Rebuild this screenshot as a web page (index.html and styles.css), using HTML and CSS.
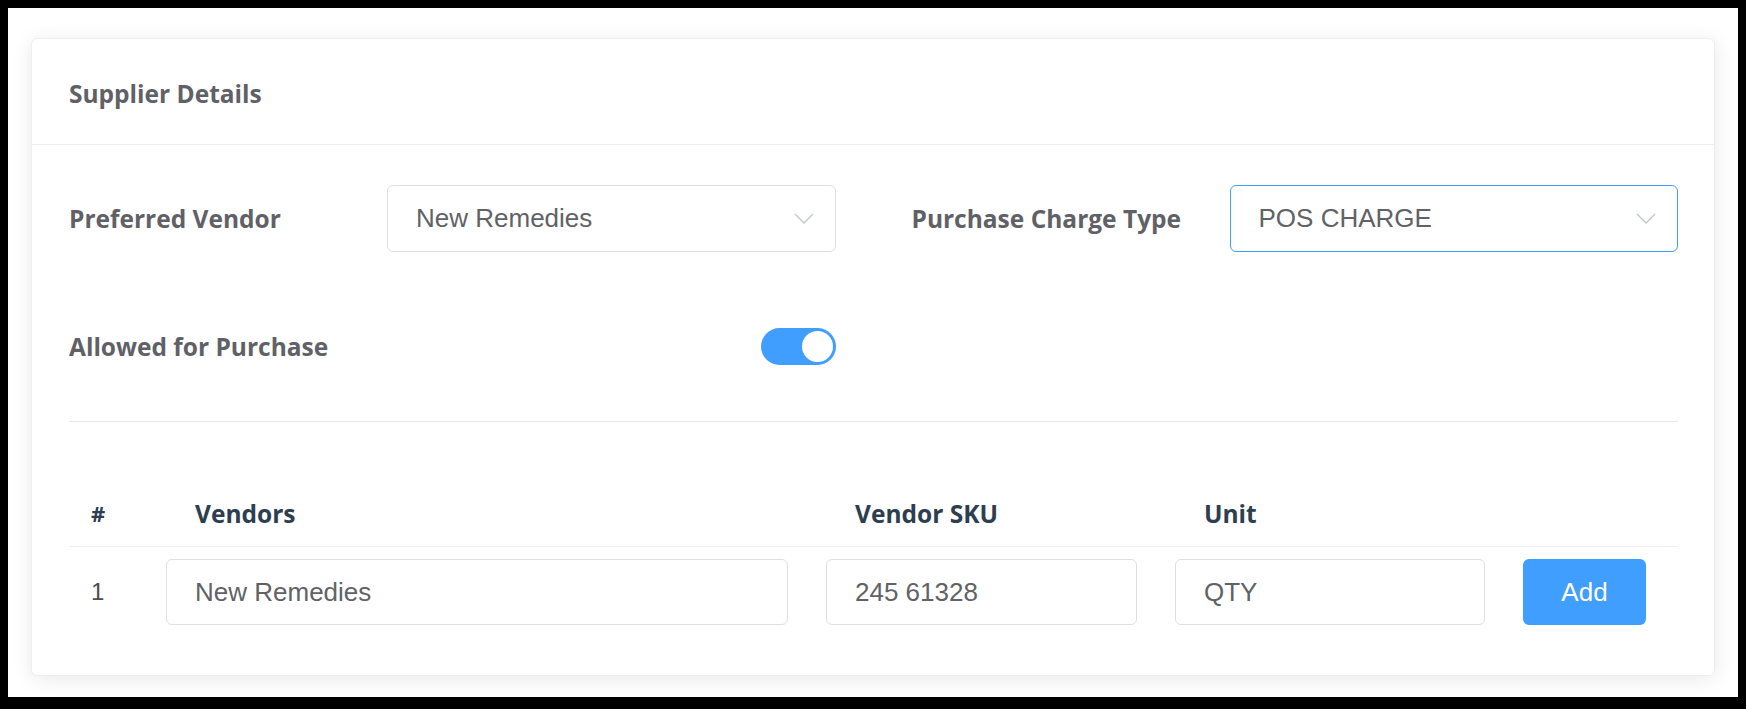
FILE: index.html
```html
<!DOCTYPE html>
<html lang="en">
<head>
<meta charset="utf-8">
<title>Supplier Details</title>
<link rel="stylesheet" href="styles.css">
</head>
<body>
<div class="card">
  <div class="card-header">Supplier Details</div>
  <div class="card-body">
    <div class="form-grid">
      <div class="form-item">
        <label class="label">Preferred Vendor</label>
        <div class="select">
          <span class="select-value">New Remedies</span>
          <svg class="caret" viewBox="0 0 20 11" width="20" height="11"><path d="M1 1 L10 10 L19 1" fill="none" stroke="#c0c4cc" stroke-width="1.3"/></svg>
        </div>
      </div>
      <div class="form-item">
        <label class="label">Purchase Charge Type</label>
        <div class="select is-focus">
          <span class="select-value">POS CHARGE</span>
          <svg class="caret" viewBox="0 0 20 11" width="20" height="11"><path d="M1 1 L10 10 L19 1" fill="none" stroke="#c0c4cc" stroke-width="1.3"/></svg>
        </div>
      </div>
      <div class="form-item switch-item">
        <label class="label">Allowed for Purchase</label>
        <div class="switch-wrap">
          <span class="switch"><span class="knob"></span></span>
        </div>
      </div>
    </div>
    <div class="divider"></div>
    <div class="table">
      <div class="tr th">
        <div class="cell num">#</div>
        <div class="cell head">Vendors</div>
        <div class="cell head">Vendor SKU</div>
        <div class="cell head">Unit</div>
        <div class="cell"></div>
      </div>
      <div class="tr td">
        <div class="cell num idx">1</div>
        <div class="cell"><div class="input">New Remedies</div></div>
        <div class="cell"><div class="input">245 61328</div></div>
        <div class="cell"><div class="input">QTY</div></div>
        <div class="cell"><button class="btn">Add</button></div>
      </div>
    </div>
  </div>
</div>
</body>
</html>
```

FILE: styles.css
```css
html {
  background: #000;
}
body {
  margin: 8px;
  padding: 30px 23px 21px 23px;
  background: #fff;
  font-family: "Open Sans", "Noto Sans", sans-serif;
}
.card {
  background: #fff;
  border: 1px solid #ebeef5;
  border-radius: 6px;
  box-shadow: 0 3px 20px rgba(0, 0, 0, 0.09);
  box-sizing: border-box;
}
.card-header {
  height: 106px;
  box-sizing: border-box;
  display: flex;
  align-items: center;
  padding: 4px 37px 0;
  border-bottom: 1px solid #ebeef5;
  font-weight: 700;
  font-size: 24.5px;
  color: #5f6166;
}
.card-body {
  padding: 40px 36px 38px 37px;
}
.form-grid {
  display: grid;
  grid-template-columns: 1fr 1fr;
  column-gap: 76px;
  row-gap: 61px;
}
.form-item {
  display: grid;
  grid-template-columns: 318px 1fr;
  align-items: center;
  height: 67px;
}
.label {
  font-weight: 700;
  font-size: 24.5px;
  color: #5f6166;
}
.select {
  height: 67px;
  box-sizing: border-box;
  border: 1px solid #dcdfe6;
  border-radius: 6px;
  display: flex;
  align-items: center;
  justify-content: space-between;
  padding: 0 21px 0 28px;
  font-family: "Liberation Sans", Arial, sans-serif;
  font-size: 26px;
  color: #606266;
}
.select.is-focus {
  border-color: #409eff;
}
.caret {
  display: block;
  width: 20px;
  height: 11px;
}
.switch-wrap {
  display: flex;
  justify-content: flex-end;
}
.switch {
  width: 75px;
  height: 37px;
  border-radius: 19px;
  background: #409eff;
  display: flex;
  align-items: center;
  justify-content: flex-end;
  padding-right: 3px;
  box-sizing: border-box;
}
.knob {
  width: 31px;
  height: 31px;
  border-radius: 50%;
  background: #fff;
}
.divider {
  height: 1px;
  background: #e4e7ed;
  margin-top: 41px;
}
.table {
  margin-top: 58px;
}
.tr {
  display: grid;
  grid-template-columns: 59px 622px 311px 310px 123px;
  column-gap: 38px;
  align-items: center;
}
.th {
  height: 66px;
  border-bottom: 1px solid #ebeef5;
}
.td {
  padding: 12px 0;
}
.cell.num {
  padding-left: 22px;
}
.cell.head {
  padding-left: 29px;
}
.th .cell {
  font-weight: 700;
  font-size: 24.5px;
  color: #2c3e50;
}
.th .cell.num {
  font-size: 22px;
}
.idx {
  font-family: "Liberation Sans", Arial, sans-serif;
  font-size: 24px;
  color: #4a4c50;
}
.input {
  height: 66px;
  box-sizing: border-box;
  border: 1px solid #dcdfe6;
  border-radius: 6px;
  display: flex;
  align-items: center;
  padding: 0 28px;
  font-family: "Liberation Sans", Arial, sans-serif;
  font-size: 26px;
  color: #606266;
}
.btn {
  width: 123px;
  height: 66px;
  border: none;
  border-radius: 6px;
  background: #409eff;
  color: #fff;
  font-family: "Liberation Sans", Arial, sans-serif;
  font-size: 26px;
  padding: 0;
}
```
